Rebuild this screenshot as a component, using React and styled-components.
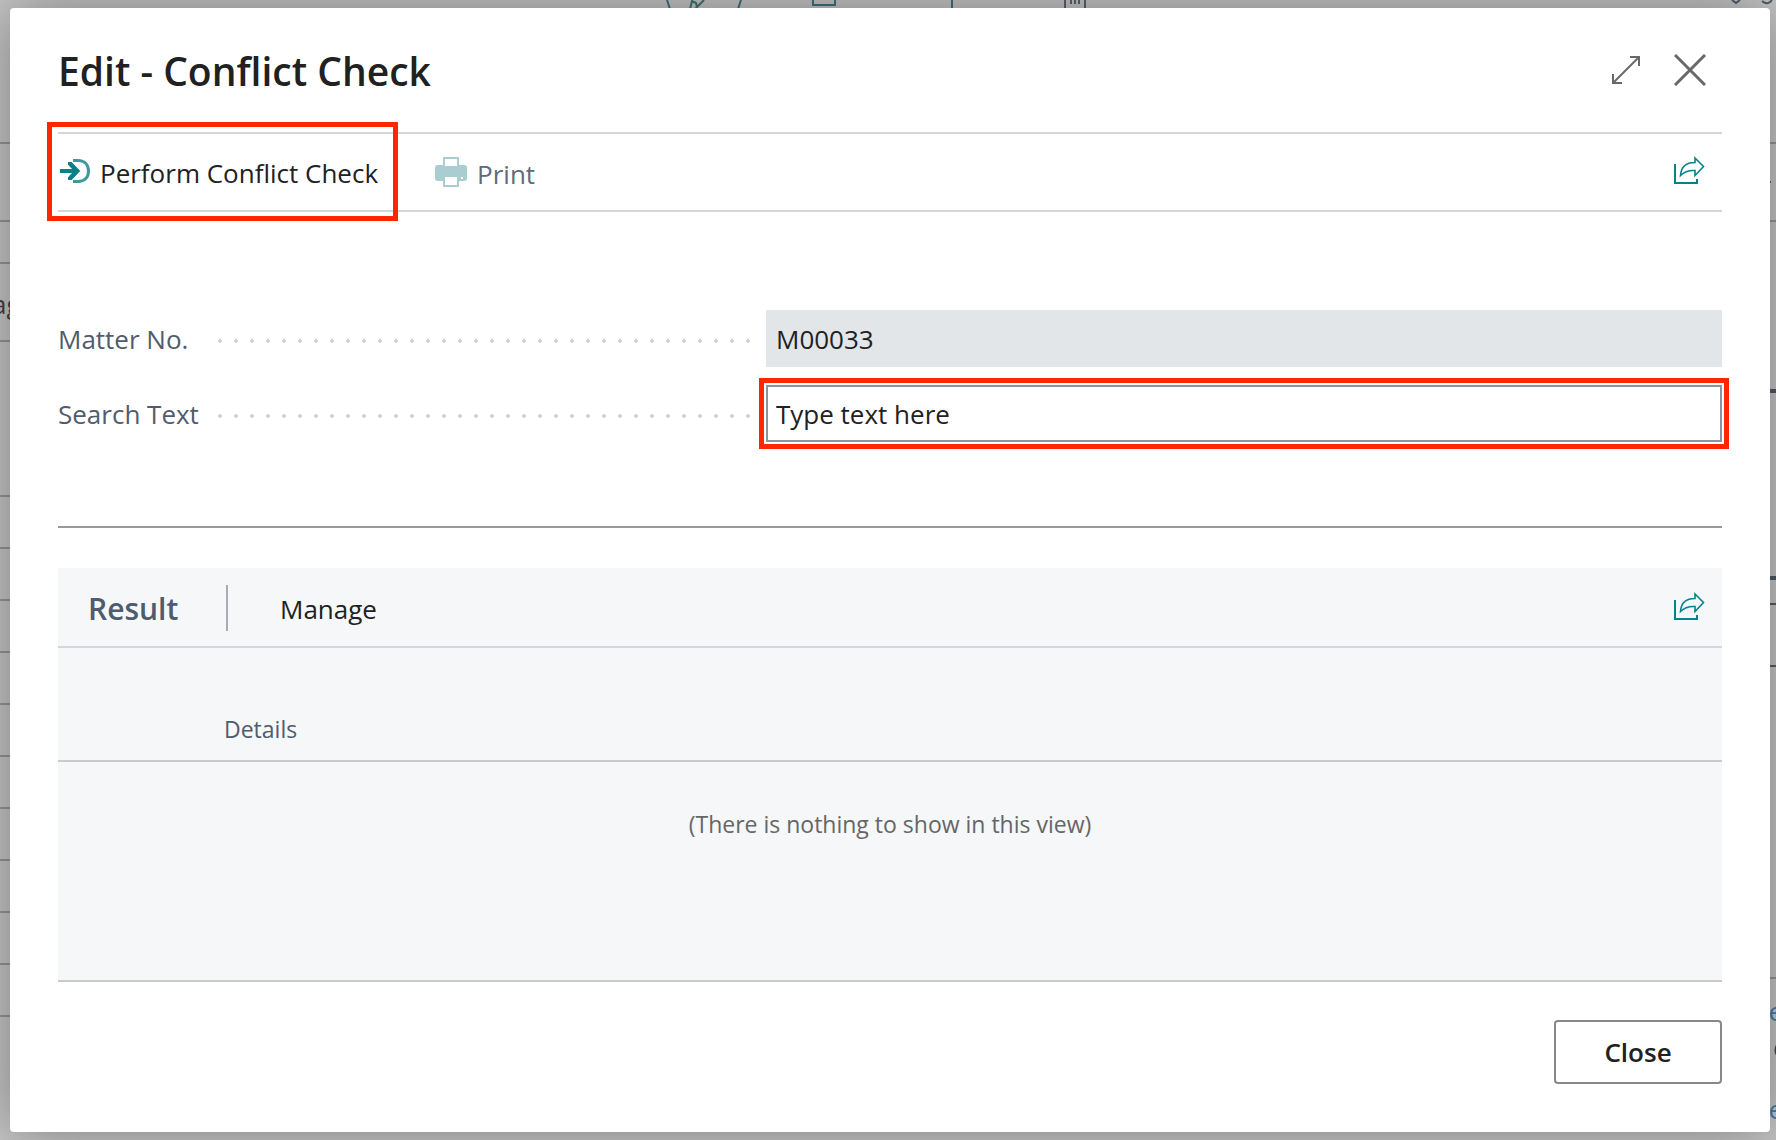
import { useState } from 'react';
import styled, { createGlobalStyle } from 'styled-components';

/*
 *  Component: App
 *  Description: Conflict Check dialog, shown over the dimmed matter page
 */

const App = () => {

  const [ searchText, setSearchText ] = useState("Type text here");

  return(
    <Page>
      <GlobalStyle />
      <Backdrop />
      <Dialog role="dialog" aria-labelledby="dialog-title">
        <Header>
          <Title id="dialog-title">Edit - Conflict Check</Title>
          <WindowButtons>
            <IconButton aria-label="Expand"><ExpandIcon /></IconButton>
            <IconButton aria-label="Close dialog"><CloseIcon /></IconButton>
          </WindowButtons>
        </Header>

        <ActionBar>
          <Highlight>
            <ActionButton>
              <PerformIcon />
              <ActionText>Perform Conflict Check</ActionText>
            </ActionButton>
          </Highlight>
          <ActionButton disabled>
            <PrintIcon />
            <ActionText>Print</ActionText>
          </ActionButton>
          <ShareButton aria-label="Share"><ShareIcon /></ShareButton>
        </ActionBar>

        <Fields>
          <Field>
            <FieldLabel htmlFor="matter-no">Matter No.</FieldLabel>
            <Dots />
            <FieldBox>
              <FieldInput id="matter-no" value="M00033" readOnly />
            </FieldBox>
          </Field>
          <Field>
            <FieldLabel htmlFor="search-text">Search Text</FieldLabel>
            <Dots />
            <FieldBox $marked>
              <FieldInput
                id="search-text"
                value={searchText}
                onChange={(event) => setSearchText(event.target.value)}
              />
            </FieldBox>
          </Field>
        </Fields>

        <Result>
          <ResultBar>
            <ResultTitle>Result</ResultTitle>
            <ManageButton>Manage</ManageButton>
            <ShareButton aria-label="Share result"><ShareIcon /></ShareButton>
          </ResultBar>
          <ResultTable>
            <thead>
              <tr><DetailsHead scope="col">Details</DetailsHead></tr>
            </thead>
            <tbody>
              <tr><EmptyCell>(There is nothing to show in this view)</EmptyCell></tr>
            </tbody>
          </ResultTable>
        </Result>

        <Footer>
          <CloseButton>Close</CloseButton>
        </Footer>
      </Dialog>
    </Page>
  );
}

// Icons

const PerformIcon = () => (
  <svg width="30" height="24" viewBox="0 0 30 24" fill="none" stroke="#0b8086" aria-hidden="true">
    <path d="M0 12H18" strokeWidth="4" />
    <path d="M8 4.500L11 4.500L18 12L11 19.500H8" strokeWidth="3" />
    <path d="M10 5L17 12L10 19" strokeWidth="4" />
    <path d="M13 1.500H19C25 2 28.500 6 28.500 12S25 22 19 22.500H13" strokeWidth="3" strokeOpacity="0.8" />
  </svg>
);

const PrintIcon = () => (
  <svg width="32" height="30" viewBox="0 0 32 30" aria-hidden="true">
    <path fill="#a9cdd1" d="M8 0H24V8H29Q32 8 32 11V21Q32 24 29 24H24V30H8V24H3Q0 24 0 21V11Q0 8 3 8H8Z" />
    <path fill="#fff" d="M10 2H22V9H10ZM10 20H22V28H10ZM26 20H28V22H26Z" />
  </svg>
);

const ShareIcon = () => (
  <svg width="32" height="28" viewBox="0 0 32 28" fill="none" stroke="#06828a" strokeWidth="2" aria-hidden="true">
    <path d="M2 8V27H24V23" />
    <path strokeWidth="1.600" d="M22 2L30.500 10.500L22 19.500V14.500C15 14 11 16 7.500 19.500C8 11 13 6.500 22 6.500Z" />
  </svg>
);

const ExpandIcon = () => (
  <svg width="28" height="28" viewBox="0 0 28 28" fill="none" stroke="#696969" strokeWidth="2" aria-hidden="true">
    <path d="M18 1H27V10M1 18V27H10M1 27L27 1" />
  </svg>
);

const CloseIcon = () => (
  <svg width="32" height="32" viewBox="0 0 32 32" fill="none" stroke="#696969" strokeWidth="3" aria-hidden="true">
    <path d="M1 1L31 31M31 1L1 31" />
  </svg>
);

// What is left visible of the page behind the dialog
const Backdrop = () => (
  <BackdropLayer aria-hidden="true">
    <BackdropArt>
      {[143, 221, 263, 341, 496, 548, 600, 652, 704, 756, 808, 860, 912, 964, 1016].map((y) => (
        <path key={y} d={`M0 ${y}H10`} stroke="#959595" strokeWidth="2" />
      ))}
      <g fill="none" stroke="#3c7577" strokeWidth="2">
        <path d="M667 0L670 9M741 0L738 9M690 9L692 1L696 3L697 7M704 0L695 9" />
        <path d="M813 0V5H835V0M952 0V9" />
      </g>
      <path d="M1065 0V9M1085 0V9M1071 0V4M1075 0V4M1079 0V4" fill="none" stroke="#5e636b" strokeWidth="2" />
    </BackdropArt>
    <BackdropArtRight>
      <path d="M4 0L8 3L12 0M34 1Q40 6 44 0" fill="none" stroke="#555c68" strokeWidth="2" />
      <path d="M40 143H50M40 221H50M40 978H50" stroke="#959595" strokeWidth="2" />
      <path d="M40 182H43" stroke="#3c7577" strokeWidth="2" />
      <path d="M40 391H50M40 578H50" stroke="#4f5863" strokeWidth="4" />
      <path d="M40 604H50M40 666H50" stroke="#5c5c5c" strokeWidth="2" />
      <path d="M49 1045Q46 1050 49 1055" fill="none" stroke="#444" strokeWidth="2" />
    </BackdropArtRight>
    <LeftCut>ag</LeftCut>
    <RightCut $top={993}>e</RightCut>
    <RightCut $top={1091}>e</RightCut>
  </BackdropLayer>
);

const GlobalStyle = createGlobalStyle `
  * {
    box-sizing: border-box;
  }

  body {
    margin: 0;
    background: #c6c6c6;
    color: #212121;
    font-family: "Open Sans", "Noto Sans", sans-serif;
    font-size: 26px;
    line-height: 36px;
    font-variant-ligatures: none;
  }

  button, input {
    color: inherit;
    font: inherit;
  }
`;

// Page area, the dialog fills it apart from a narrow rim
const Page = styled.main `
  position: relative;
  min-height: 100vh;
  padding: 8px 6px 8px 10px;
  display: flex;
  overflow: hidden;
`;

const BackdropLayer = styled.div `
  position: absolute;
  inset: 0;
  overflow: hidden;
`;

const BackdropArt = styled.svg `
  position: absolute;
  top: 0;
  left: 0;
  width: 1100px;
  height: 1140px;
`;

const BackdropArtRight = styled.svg `
  position: absolute;
  top: 0;
  right: 0;
  width: 48px;
  height: 1140px;
`;

const LeftCut = styled.span `
  position: absolute;
  top: 286px;
  left: -8px;
  color: #444;
`;

const RightCut = styled.span `
  position: absolute;
  top: ${props => props.$top}px;
  right: -7px;
  color: #3f7fb0;
`;

const Dialog = styled.section `
  position: relative;
  flex: 1;
  min-width: 0;
  padding: 40px 48px 48px;
  display: flex;
  flex-direction: column;
  background: white;
  border-radius: 4px;
  box-shadow: 0 0 60px rgba(0, 0, 0, 0.38);
`;

const Header = styled.header `
  height: 84px;
  display: flex;
  justify-content: space-between;
  align-items: flex-start;
`;

const Title = styled.h1 `
  margin: 0;
  font-size: 39px;
  line-height: 46px;
  font-weight: 600;
`;

const WindowButtons = styled.div `
  display: flex;
  align-items: center;
  gap: 34px;
  padding: 6px 16px 0 0;
`;

const IconButton = styled.button `
  display: flex;
  padding: 0;
  border: none;
  background: none;
`;

// Toolbar under the title
const ActionBar = styled.div `
  height: 80px;
  display: flex;
  align-items: center;
  border-top: 2px solid #d3d6db;
  border-bottom: 2px solid #d3d6db;
`;

const Highlight = styled.div `
  height: 99px;
  margin: 0 37px 2px -11px;
  padding: 0 15px 0 8px;
  flex: none;
  display: flex;
  border: 5px solid #ff2600;
`;

const ActionButton = styled.button `
  display: flex;
  align-items: center;
  gap: 10px;
  padding: 0;
  border: none;
  background: none;
  white-space: nowrap;

  &:disabled {
    color: #616a7a;
  }
`;

const ActionText = styled.span `
  padding-top: 4px;
`;

const ShareButton = styled(IconButton) `
  margin: 0 17px 4px auto;
`;

const Fields = styled.div `
  padding: 98px 0 84px;
  display: flex;
  flex-direction: column;
  gap: 18px;
  border-bottom: 2px solid #999;
`;

const Field = styled.div `
  display: grid;
  grid-template-columns: 160px minmax(0, 548fr) minmax(0, 956fr);
  align-items: center;
`;

const FieldLabel = styled.label `
  color: #505c6d;
`;

// Dotted leader between label and value
const Dots = styled.span `
  height: 4px;
  margin: 4px 12px 0 0;
  background: radial-gradient(circle at 2px 2px, #d0d3d9 2px, transparent 2px) 0 0 / 16px 4px repeat-x;
`;

const FieldBox = styled.div `
  outline: ${props => props.$marked ? "5px solid #ff2600" : "none"};
  outline-offset: 2px;
`;

const FieldInput = styled.input `
  display: block;
  width: 100%;
  height: 57px;
  padding: 0 8px;
  border: 2px solid #8a949f;
  border-radius: 0;
  background: white;

  &:read-only {
    border-color: #e2e6e9;
    background: #e2e6e9;
  }
`;

const Result = styled.section `
  flex: 1;
  margin-top: 40px;
  background: #f5f7f9;
  border-bottom: 2px solid #c8cacc;
`;

const ResultBar = styled.div `
  height: 80px;
  padding-top: 2px;
  display: flex;
  align-items: center;
  border-bottom: 2px solid #d3d6db;
`;

const ResultTitle = styled.h2 `
  width: 170px;
  margin: 0;
  padding: 2px 0 0 30px;
  border-right: 2px solid #a6adb6;
  color: #505c6d;
  font-size: 30px;
  line-height: 44px;
  font-weight: 600;
`;

const ManageButton = styled.button `
  padding: 2px 0 0;
  margin-left: 52px;
  border: none;
  background: none;
`;

const ResultTable = styled.table `
  width: 100%;
  border-collapse: collapse;
  font-size: 23px;
  line-height: 32px;
`;

const DetailsHead = styled.th `
  height: 113px;
  padding: 0 0 15px 166px;
  border-bottom: 2px solid #c8cacc;
  color: #505c6d;
  font-weight: 400;
  text-align: left;
  vertical-align: bottom;
`;

const EmptyCell = styled.td `
  padding: 46px 0 0;
  color: #666;
  text-align: center;
`;

const Footer = styled.footer `
  padding-top: 38px;
  display: flex;
  justify-content: flex-end;
`;

const CloseButton = styled.button `
  width: 168px;
  height: 64px;
  border: 2px solid #888;
  border-radius: 4px;
  background: white;
  font-weight: 600;
`;

export default App;
